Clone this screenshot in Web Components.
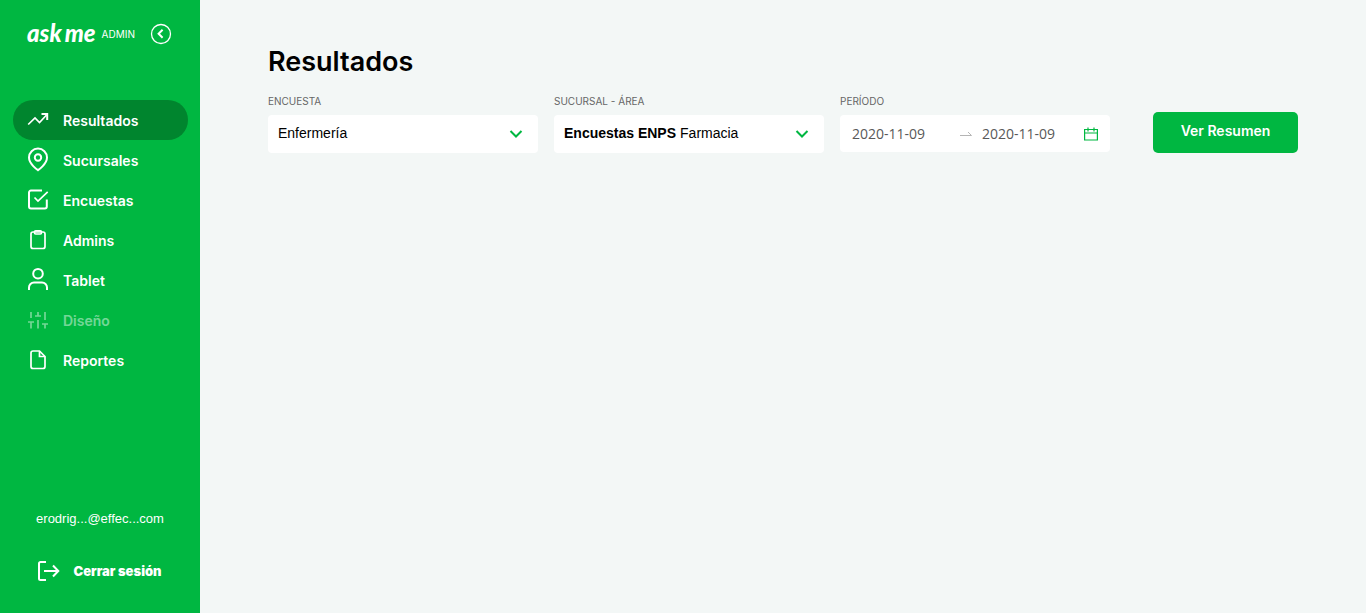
<!DOCTYPE html>
<html lang="es">
<head>
<meta charset="utf-8">
<title>Ask me Admin - Resultados</title>
<style>
  body { margin: 0; background: #f3f7f6; font-family: Inter, "Liberation Sans", sans-serif; color: #000; }
</style>
</head>
<body>
<am-shell>
  <am-sidebar slot="side">
    <am-nav-item icon="trend" active>Resultados</am-nav-item>
    <am-nav-item icon="pin">Sucursales</am-nav-item>
    <am-nav-item icon="check">Encuestas</am-nav-item>
    <am-nav-item icon="clip">Admins</am-nav-item>
    <am-nav-item icon="user">Tablet</am-nav-item>
    <am-nav-item icon="sliders" disabled>Diseño</am-nav-item>
    <am-nav-item icon="file">Reportes</am-nav-item>
    <span slot="account">erodrig...@effec...com</span>
  </am-sidebar>
  <am-results></am-results>
</am-shell>

<script>
const ICONS = {
  trend: '<path d="M2.200 16.500l6.800-6.500 4.500 4.500L21 6.500"/><path d="M15.500 6h5.700v6" stroke-width="2"/>',
  pin: '<path d="M21 9.600C21 16.200 12 22.200 12 22.200S3 16.200 3 9.600a9 9 0 0 1 18 0z" stroke-width="2"/><circle cx="12" cy="9.500" r="3.200" stroke-width="2"/>',
  check: '<path d="M20.800 11.500v7a2 2 0 0 1-2 2H5a2 2 0 0 1-2-2V4.500a2 2 0 0 1 2-2h11" stroke-width="2"/><path d="M8.500 9.500l3.500 3.500L21.700 3.800"/>',
  clip: '<rect x="5" y="4" width="14" height="16.500" rx="2"/><rect x="8.500" y="2.800" width="7" height="3.200" rx="1.200"/>',
  user: '<circle cx="12" cy="5.700" r="4.800" stroke-width="2"/><path d="M3 22v-2.500a5 5 0 0 1 5-5h8a5 5 0 0 1 5 5V22" stroke-width="2"/>',
  sliders: '<path d="M5 20.500v-6M5 10V4M12 20.500V12M12 8V4M19 20.500V16M19 12V4M2 14h6M9 8h6M16 16h6"/>',
  file: '<path d="M13.500 3H7a2 2 0 0 0-2 2v13.500a2 2 0 0 0 2 2h10a2 2 0 0 0 2-2V8.500z"/><path d="M13.500 3v5.500H19"/>'
};

function define(name, html, setup) {
  const template = document.createElement('template');
  template.innerHTML = html;
  customElements.define(name, class extends HTMLElement {
    constructor() {
      super();
      this.attachShadow({ mode: 'open' }).append(template.content.cloneNode(true));
    }
    connectedCallback() { if (setup) setup(this, this.shadowRoot); }
  });
}

define('am-shell', `
  <style>
    :host { display: flex; min-height: 100vh; }
    main { flex: 1; min-width: 0; }
    aside { flex: none; display: flex; }
  </style>
  <aside><slot name="side"></slot></aside>
  <main><slot></slot></main>`);

define('am-logo', `
  <style>
    :host { display: flex; align-items: center; color: #fff; }
    b { display: flex; gap: 3px; padding-bottom: 2px; font: italic 900 24px/28px Lato, sans-serif; }
    small { font-size: 10px; line-height: 28px; margin-left: 6px; }
  </style>
  <b><span>ask</span><span>me</span></b><small>ADMIN</small>`);

define('am-nav-item', `
  <style>
    :host { display: block; }
    a { display: flex; align-items: center; gap: 13px; height: 40px; padding: 0 13px; border-radius: 20px;
        color: #fff; text-decoration: none; font-size: 14px; font-weight: 600; }
    :host([active]) a { background: #00852e; }
    :host([disabled]) a { opacity: .45; }
    svg { flex: none; width: 24px; height: 24px; fill: none; stroke: currentColor; stroke-width: 1.7; overflow: visible; }
  </style>
  <a href="#"><svg viewBox="0 0 24 24" aria-hidden="true"></svg><slot></slot></a>`,
  (host, root) => {
    root.querySelector('svg').innerHTML = ICONS[host.getAttribute('icon')];
    if (host.hasAttribute('active')) root.querySelector('a').setAttribute('aria-current', 'page');
    if (host.hasAttribute('disabled')) root.querySelector('a').setAttribute('aria-disabled', 'true');
  });

define('am-sidebar', `
  <style>
    :host { box-sizing: border-box; display: flex; flex-direction: column; width: 200px; padding: 20px 12px; background: #00b741; color: #fff; }
    header { display: flex; align-items: center; justify-content: space-between; padding: 0 16px 0 15px; height: 28px; }
    button { border: 0; padding: 0; background: none; color: inherit; font: inherit; display: flex; align-items: center; cursor: pointer; }
    svg { fill: none; stroke: currentColor; }
    nav { margin-top: 52px; padding-left: 1px; }
    footer { margin-top: auto; display: flex; flex-direction: column; align-items: center; gap: 30px; }
    .account { font: 13px/20px "Liberation Sans", Arial, sans-serif; }
    .exit { gap: 13px; height: 24px; font-size: 13px; font-weight: 900; margin-bottom: 10px; padding-right: 2px; }
  </style>
  <header>
    <am-logo></am-logo>
    <button type="button" aria-label="Contraer menú">
      <svg width="22" height="22" viewBox="0 0 22 22"><circle cx="11" cy="11" r="9.500" stroke-width="1.300"/><path d="M12.600 6.800L8.600 10.800l4 4" stroke-width="2"/></svg>
    </button>
  </header>
  <nav><slot></slot></nav>
  <footer>
    <span class="account"><slot name="account"></slot></span>
    <button class="exit" type="button">
      <svg width="24" height="24" viewBox="0 0 24 24" stroke-width="2" aria-hidden="true"><path d="M10 3H4.500A1.500 1.500 0 0 0 3 4.500v15A1.500 1.500 0 0 0 4.500 21H10M8 12h14M17 6.500l5.300 5.500-5.300 5.500"/></svg>
      Cerrar sesión
    </button>
  </footer>`);

define('am-select', `
  <style>
    :host { display: block; }
    label { display: block; font-size: 10px; line-height: 16px; color: #666; margin-bottom: 6px; }
    .box { display: flex; align-items: center; height: 38px; padding: 0 14px 0 10px; background: #fff; border-radius: 4px;
           font: 14px/20px "Liberation Sans", Arial, sans-serif; }
    b { margin: 0 4px 2px 0; white-space: nowrap; }
    b:empty { display: none; }
    select { appearance: none; flex: 1; min-width: 0; border: 0; padding: 0; margin: 0 0 2px; background: none; color: #000; font: inherit; outline-offset: 4px; }
    svg { flex: none; }
  </style>
  <label for="s"></label>
  <div class="box"><b></b><select id="s"></select>
    <svg width="16" height="16" viewBox="0 0 16 16" fill="none" stroke="#00b741" stroke-width="2" aria-hidden="true"><path d="M2.500 5L8 10.500 13.500 5"/></svg>
  </div>`,
  (host, root) => {
    root.querySelector('label').textContent = host.getAttribute('label');
    root.querySelector('b').textContent = host.getAttribute('group') || '';
    root.querySelector('select').replaceChildren(new Option(host.getAttribute('value')));
  });

define('am-range', `
  <style>
    :host { display: block; }
    fieldset { border: 0; margin: 0; padding: 0; min-width: 0; }
    legend { padding: 0; font-size: 10px; line-height: 16px; color: #666; margin-bottom: 6px; }
    .box { display: flex; align-items: center; height: 37px; padding: 0 12px; background: #fff; border-radius: 4px; }
    input { flex: 1; min-width: 0; border: 0; padding: 0; background: none; color: #595959; font: 14px/20px "Open Sans", "Noto Sans", sans-serif; }
    .from { padding-right: 6px; }
    svg { flex: none; fill: none; }
    .arrow { margin-right: 10px; }
  </style>
  <fieldset>
    <legend>PERÍODO</legend>
    <div class="box">
      <input class="from" aria-label="Desde" value="2020-11-09">
      <svg class="arrow" width="12" height="14" viewBox="0 0 12 14" stroke="#b5b5b5" aria-hidden="true"><path d="M0 8.500h11.500L8 5"/></svg>
      <input aria-label="Hasta" value="2020-11-09">
      <svg width="14" height="14" viewBox="0 0 14 14" stroke="#00b741" aria-hidden="true"><path d="M.6 2.500h12.800v10.500H.6zM.6 6h12.800M4 .5v4M10 .5v4" stroke-width="1.200"/></svg>
    </div>
  </fieldset>`);

define('am-results', `
  <style>
    :host { display: block; padding: 45px 68px; }
    h1 { margin: 0 0 14px; font-size: 27px; line-height: 34px; font-weight: 600; }
    form { display: flex; align-items: flex-start; gap: 16px; }
    am-select, am-range { flex: 1; min-width: 0; }
    button { flex: none; width: 145px; height: 41px; margin: 19px 0 0 27px; padding: 0 0 4px; border: 0; border-radius: 5px;
             background: #00b741; color: #fff; font-family: inherit; font-size: 14px; font-weight: 600; cursor: pointer; }
  </style>
  <h1>Resultados</h1>
  <form>
    <am-select label="ENCUESTA" value="Enfermería"></am-select>
    <am-select label="SUCURSAL - ÁREA" group="Encuestas ENPS" value="Farmacia"></am-select>
    <am-range></am-range>
    <button type="button">Ver Resumen</button>
  </form>`);
</script>
</body>
</html>
